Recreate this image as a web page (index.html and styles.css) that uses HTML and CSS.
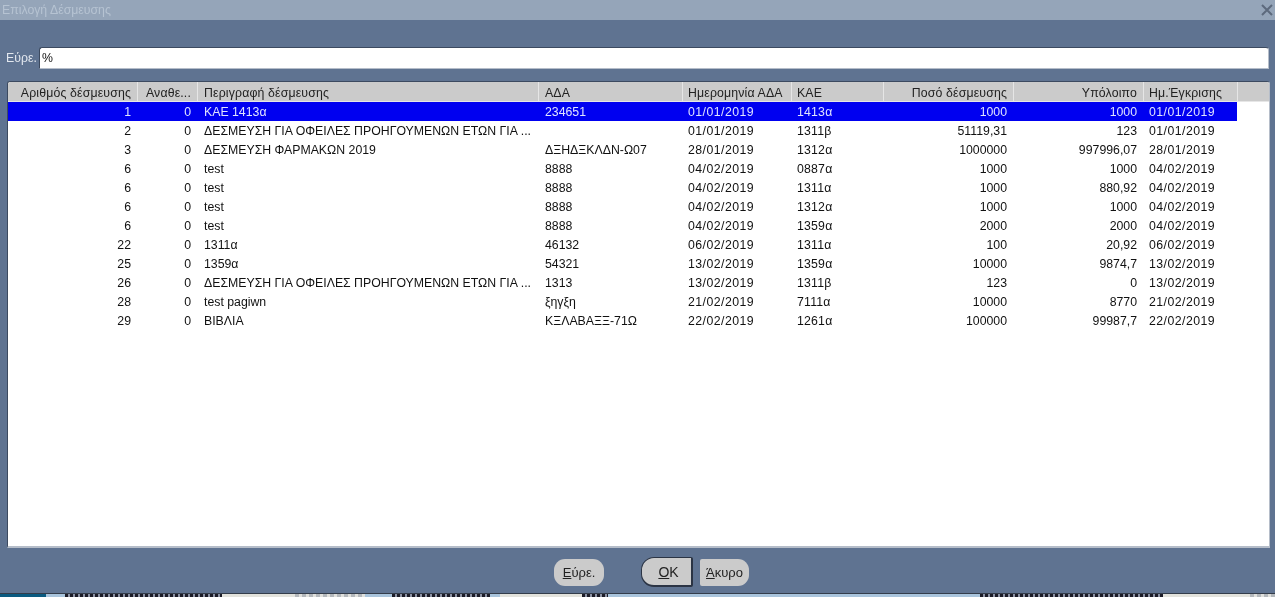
FILE: index.html
```html
<!DOCTYPE html>
<html lang="el">
<head>
<meta charset="utf-8">
<title>Επιλογή Δέσμευσης</title>
<link rel="stylesheet" href="styles.css">
</head>
<body>
<div class="dialog">
  <header class="titlebar">
    <span class="title">Επιλογή Δέσμευσης</span>
    <svg class="close" viewBox="0 0 12 12" width="12" height="12" aria-hidden="true"><path d="M1 1 L11 11 M11 1 L1 11"/></svg>
  </header>
  <div class="search">
    <label class="search-label">Εύρε.</label>
    <div class="search-input">%</div>
  </div>
  <div class="panel">
    <table class="grid">
      <colgroup>
        <col class="c1"><col class="c2"><col class="c3"><col class="c4"><col class="c5"><col class="c6"><col class="c7"><col class="c8"><col class="c9"><col>
      </colgroup>
      <thead>
        <tr>
          <th class="num">Αριθμός δέσμευσης</th><th class="num">Αναθε...</th><th>Περιγραφή δέσμευσης</th><th>ΑΔΑ</th><th>Ημερομηνία ΑΔΑ</th><th>ΚΑΕ</th><th class="num">Ποσό δέσμευσης</th><th class="num">Υπόλοιπο</th><th>Ημ.Έγκρισης</th><th class="filler"></th>
        </tr>
      </thead>
      <tbody>
        <tr class="selected"><td class="num">1</td><td class="num">0</td><td>ΚΑΕ 1413α</td><td>234651</td><td>01/01/2019</td><td>1413α</td><td class="num">1000</td><td class="num">1000</td><td>01/01/2019</td><td class="blank"></td></tr>
        <tr><td class="num">2</td><td class="num">0</td><td>ΔΕΣΜΕΥΣΗ ΓΙΑ ΟΦΕΙΛΕΣ ΠΡΟΗΓΟΥΜΕΝΩΝ ΕΤΩΝ ΓΙΑ ...</td><td></td><td>01/01/2019</td><td>1311β</td><td class="num">51119,31</td><td class="num">123</td><td>01/01/2019</td><td></td></tr>
        <tr><td class="num">3</td><td class="num">0</td><td>ΔΕΣΜΕΥΣΗ ΦΑΡΜΑΚΩΝ 2019</td><td>ΔΞΗΔΞΚΛΔΝ-Ω07</td><td>28/01/2019</td><td>1312α</td><td class="num">1000000</td><td class="num">997996,07</td><td>28/01/2019</td><td></td></tr>
        <tr><td class="num">6</td><td class="num">0</td><td>test</td><td>8888</td><td>04/02/2019</td><td>0887α</td><td class="num">1000</td><td class="num">1000</td><td>04/02/2019</td><td></td></tr>
        <tr><td class="num">6</td><td class="num">0</td><td>test</td><td>8888</td><td>04/02/2019</td><td>1311α</td><td class="num">1000</td><td class="num">880,92</td><td>04/02/2019</td><td></td></tr>
        <tr><td class="num">6</td><td class="num">0</td><td>test</td><td>8888</td><td>04/02/2019</td><td>1312α</td><td class="num">1000</td><td class="num">1000</td><td>04/02/2019</td><td></td></tr>
        <tr><td class="num">6</td><td class="num">0</td><td>test</td><td>8888</td><td>04/02/2019</td><td>1359α</td><td class="num">2000</td><td class="num">2000</td><td>04/02/2019</td><td></td></tr>
        <tr><td class="num">22</td><td class="num">0</td><td>1311α</td><td>46132</td><td>06/02/2019</td><td>1311α</td><td class="num">100</td><td class="num">20,92</td><td>06/02/2019</td><td></td></tr>
        <tr><td class="num">25</td><td class="num">0</td><td>1359α</td><td>54321</td><td>13/02/2019</td><td>1359α</td><td class="num">10000</td><td class="num">9874,7</td><td>13/02/2019</td><td></td></tr>
        <tr><td class="num">26</td><td class="num">0</td><td>ΔΕΣΜΕΥΣΗ ΓΙΑ ΟΦΕΙΛΕΣ ΠΡΟΗΓΟΥΜΕΝΩΝ ΕΤΩΝ ΓΙΑ ...</td><td>1313</td><td>13/02/2019</td><td>1311β</td><td class="num">123</td><td class="num">0</td><td>13/02/2019</td><td></td></tr>
        <tr><td class="num">28</td><td class="num">0</td><td>test pagiwn</td><td>ξηγξη</td><td>21/02/2019</td><td>7111α</td><td class="num">10000</td><td class="num">8770</td><td>21/02/2019</td><td></td></tr>
        <tr><td class="num">29</td><td class="num">0</td><td>ΒΙΒΛΙΑ</td><td>ΚΞΛΑΒΑΞΞ-71Ω</td><td>22/02/2019</td><td>1261α</td><td class="num">100000</td><td class="num">99987,7</td><td>22/02/2019</td><td></td></tr>
      </tbody>
    </table>
  </div>
  <footer class="actions">
    <button class="btn find" type="button"><u>Ε</u>ύρε.</button>
    <button class="btn ok" type="button"><u>O</u>K</button>
    <button class="btn cancel" type="button"><u>Ά</u>κυρο</button>
  </footer>
</div>
<div class="behind">
  <span class="seg teal"></span><span class="seg blue w19"></span><span class="seg ink w157"></span><span class="seg pale w73"></span><span class="seg faint w70"></span><span class="seg blue w27"></span><span class="seg ink w98"></span><span class="seg blue w10"></span><span class="seg pale w82"></span><span class="seg ink w26"></span><span class="seg blue w372"></span><span class="seg ink w183"></span><span class="seg pale w87"></span><span class="seg faint w25"></span>
</div>
</body>
</html>
```
FILE: styles.css
```css
* { box-sizing: border-box; }
html, body { margin: 0; padding: 0; height: 597px; overflow: hidden; }
body { font-family: "Liberation Sans", Arial, sans-serif; font-size: 12.3px; color: #111; background: #5f7391; }

.dialog { height: 594px; display: flex; flex-direction: column; background: #5f7391; border-bottom: 1px solid #333c4a; filter: blur(.3px); }

.titlebar { height: 20px; flex: none; background: #95a5b9; display: flex; align-items: center; justify-content: space-between; padding: 0 2px 1px 2px; }
.title { color: #b6c3d2; }
.close { fill: none; stroke: #5d6a7d; stroke-width: 2; }

.search { margin-top: 27px; height: 22px; flex: none; display: flex; align-items: center; padding: 0 6px; }
.search-label { width: 33px; color: #e3e8ef; flex: none; }
.search-input { flex: 1; height: 22px; background: #fff; border: 1px solid #3c4a60; border-right-color: #b5bdc9; border-bottom-color: #b5bdc9; border-radius: 3px 3px 0 0; padding: 3px 2px; line-height: 15px; }

.panel { margin: 12px 5px 0 7px; height: 467px; flex: none; background: #fff; border: 1px solid #3c4a60; border-right-color: #b5bdc9; border-bottom: 2px solid #b5bdc9; border-radius: 3px 3px 0 0; overflow: hidden; }

.grid { border-collapse: separate; border-spacing: 0; table-layout: fixed; width: 100%; }
.c1 { width: 129px; } .c2 { width: 60px; } .c3 { width: 341px; } .c4 { width: 144px; } .c5 { width: 109px; } .c6 { width: 92px; } .c7 { width: 130px; } .c8 { width: 130px; } .c9 { width: 94px; }

.grid th { height: 20px; padding: 2px 6px 0; font-weight: normal; text-align: left; letter-spacing: .15px; background: #cbcbcb; color: #222; border-bottom: 1px solid #e6e6e6; white-space: nowrap; overflow: hidden; }
.grid th + th { border-left: 1px solid #e6e6e6; }
.grid th:nth-child(5), .grid th:nth-child(6), .grid th:nth-child(9) { padding-left: 5px; }
.grid td { height: 19px; padding: 0 6px; white-space: nowrap; overflow: hidden; }
.grid td:nth-child(3), .grid td:nth-child(4) { padding-left: 7px; }
.grid td:nth-child(5), .grid td:nth-child(9) { letter-spacing: .45px; }
.grid td:nth-child(6) { letter-spacing: .2px; }
.grid th.num, .grid td.num { text-align: right; }

.selected td { background: #0000f0; color: #dfe3ff; }
.selected td.blank { background: #fff; }

.actions { flex: 1; display: flex; align-items: center; padding: 3px 0 0 554px; }
.btn { font: 13px "Liberation Sans", Arial, sans-serif; color: #222; background: #cbcbcb; border: 0; padding: 0; height: 27px; }
.find { width: 50px; border-radius: 11px; }
.ok { width: 52px; height: 30px; margin-left: 37px; border: 1px solid #2b3444; border-right-width: 2px; border-bottom-width: 2px; border-radius: 13px 2px 2px 13px; padding-left: 4px; font-size: 14px; }
.cancel { width: 49px; margin-left: 7px; border-radius: 2px 11px 11px 2px; }

.behind { height: 3px; display: flex; }
.seg { display: block; flex: none; height: 100%; }
.teal { width: 46px; background: #0a5a80; }
.blue { background: #a9c4dc; }
.pale { background: #e2e2dc; }
.ink { background: repeating-linear-gradient(to right, #1d1d28 0 3px, #8d93a5 3px 5px); }
.faint { background: repeating-linear-gradient(to right, #b4b8bc 0 4px, #e0e0dc 4px 7px); }
.w19 { width: 19px; } .w157 { width: 157px; } .w73 { width: 73px; } .w70 { width: 70px; } .w27 { width: 27px; } .w98 { width: 98px; } .w10 { width: 10px; } .w82 { width: 82px; } .w26 { width: 26px; } .w372 { width: 372px; } .w183 { width: 183px; } .w87 { width: 87px; } .w25 { width: 25px; }
```
